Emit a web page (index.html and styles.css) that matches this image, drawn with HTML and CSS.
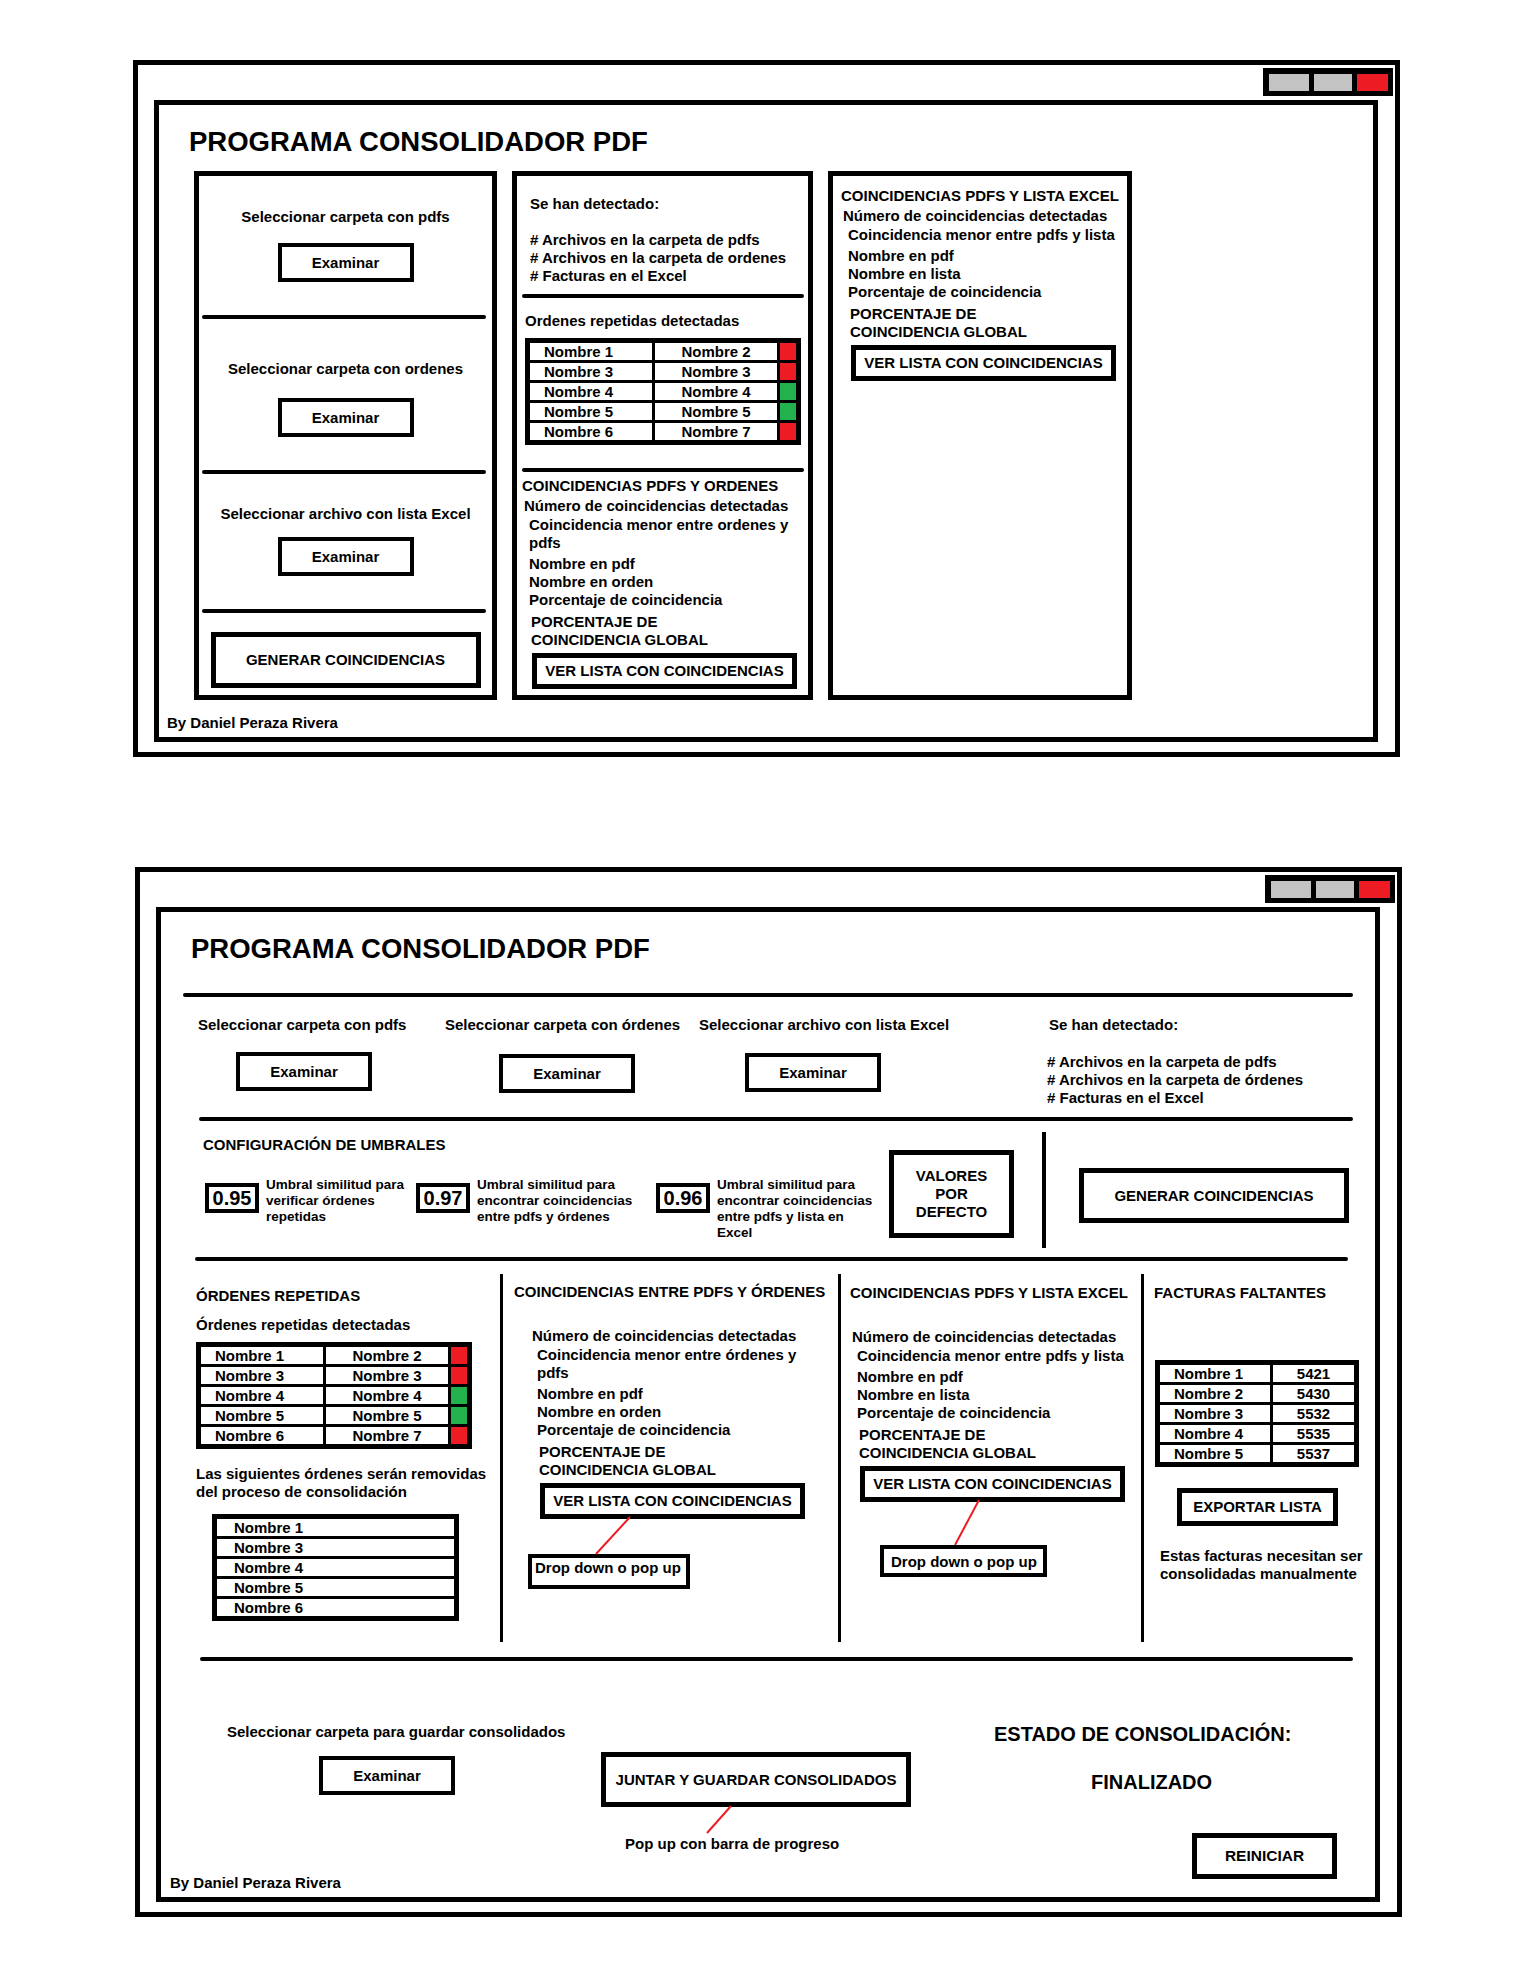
FILE: index.html
```html
<!DOCTYPE html>
<html lang="es">
<head>
    <meta charset="UTF-8">
    <meta name="viewport" content="width=device-width, initial-scale=1.0">
    <title>Programa Consolidador PDF - Bocetos</title>
    <link rel="stylesheet" href="styles.css">
</head>
<body>

    <!-- Boceto 1: tres paneles -->
    <div class="window">
        <div class="win-controls">
            <span class="win-btn"></span>
            <span class="win-btn win-btn-max"></span>
            <span class="win-btn win-btn-close"></span>
        </div>
        <div class="app">
            <h1 class="app-title">PROGRAMA CONSOLIDADOR PDF</h1>

            <div class="panels">
                <div class="panel">
                    <div class="pick pick-pdfs">
                        <p>Seleccionar carpeta con pdfs</p>
                        <button class="btn btn-examinar">Examinar</button>
                    </div>
                    <div class="rule rule-panel"></div>
                    <div class="pick pick-ordenes">
                        <p>Seleccionar carpeta con ordenes</p>
                        <button class="btn btn-examinar">Examinar</button>
                    </div>
                    <div class="rule rule-panel"></div>
                    <div class="pick pick-excel">
                        <p>Seleccionar archivo con lista Excel</p>
                        <button class="btn btn-examinar">Examinar</button>
                    </div>
                    <div class="rule rule-panel"></div>
                    <div class="pick pick-run">
                        <button class="btn btn-generar">GENERAR COINCIDENCIAS</button>
                    </div>
                </div>

                <div class="panel panel-mid">
                    <div class="detect">
                        <p class="detect-head">Se han detectado:</p>
                        <ul class="detect-list">
                            <li># Archivos en la carpeta de pdfs</li>
                            <li># Archivos en la carpeta de ordenes</li>
                            <li># Facturas en el Excel</li>
                        </ul>
                    </div>
                    <div class="rule rule-mid"></div>
                    <p class="rep-label">Ordenes repetidas detectadas</p>
                    <div class="name-grid">
                        <span class="cell cell-a">Nombre 1</span><span class="cell cell-b">Nombre 2</span><span class="flag flag-red"></span>
                        <span class="cell cell-a">Nombre 3</span><span class="cell cell-b">Nombre 3</span><span class="flag flag-red"></span>
                        <span class="cell cell-a">Nombre 4</span><span class="cell cell-b">Nombre 4</span><span class="flag flag-green"></span>
                        <span class="cell cell-a">Nombre 5</span><span class="cell cell-b">Nombre 5</span><span class="flag flag-green"></span>
                        <span class="cell cell-a">Nombre 6</span><span class="cell cell-b">Nombre 7</span><span class="flag flag-red"></span>
                    </div>
                    <div class="rule rule-mid rule-mid-low"></div>
                    <div class="stats">
                        <p class="stats-head">COINCIDENCIAS PDFS Y ORDENES</p>
                        <div class="stats-body">
                            <p class="stats-count">Número de coincidencias detectadas</p>
                            <p class="stats-low">Coincidencia menor entre ordenes y<br>pdfs</p>
                            <ul class="stats-names">
                                <li>Nombre en pdf</li>
                                <li>Nombre en orden</li>
                                <li>Porcentaje de coincidencia</li>
                            </ul>
                            <p class="stats-global">PORCENTAJE DE<br>COINCIDENCIA GLOBAL</p>
                            <div class="stats-action">
                                <button class="btn btn-list">VER LISTA CON COINCIDENCIAS</button>
                            </div>
                        </div>
                    </div>
                </div>

                <div class="panel panel-right">
                    <div class="stats">
                        <p class="stats-head">COINCIDENCIAS PDFS Y LISTA EXCEL</p>
                        <div class="stats-body">
                            <p class="stats-count">Número de coincidencias detectadas</p>
                            <p class="stats-low">Coincidencia menor entre pdfs y lista</p>
                            <ul class="stats-names">
                                <li>Nombre en pdf</li>
                                <li>Nombre en lista</li>
                                <li>Porcentaje de coincidencia</li>
                            </ul>
                            <p class="stats-global">PORCENTAJE DE<br>COINCIDENCIA GLOBAL</p>
                            <div class="stats-action">
                                <button class="btn btn-list">VER LISTA CON COINCIDENCIAS</button>
                            </div>
                        </div>
                    </div>
                </div>
            </div>

            <p class="credit credit-top">By Daniel Peraza Rivera</p>
        </div>
    </div>

    <!-- Boceto 2: flujo completo -->
    <div class="window window-v2">
        <div class="win-controls">
            <span class="win-btn"></span>
            <span class="win-btn win-btn-max"></span>
            <span class="win-btn win-btn-close"></span>
        </div>
        <div class="app">
            <h1 class="app-title">PROGRAMA CONSOLIDADOR PDF</h1>
            <div class="rule rule-top"></div>

            <div class="sources">
                <div class="source source-pdfs">
                    <p>Seleccionar carpeta con pdfs</p>
                    <button class="btn btn-examinar">Examinar</button>
                </div>
                <div class="source source-ordenes">
                    <p>Seleccionar carpeta con órdenes</p>
                    <button class="btn btn-examinar">Examinar</button>
                </div>
                <div class="source source-excel">
                    <p>Seleccionar archivo con lista Excel</p>
                    <button class="btn btn-examinar">Examinar</button>
                </div>
                <div class="detect detect-v2">
                    <p class="detect-head">Se han detectado:</p>
                    <ul class="detect-list">
                        <li># Archivos en la carpeta de pdfs</li>
                        <li># Archivos en la carpeta de órdenes</li>
                        <li># Facturas en el Excel</li>
                    </ul>
                </div>
            </div>
            <div class="rule rule-sources"></div>

            <div class="config">
                <div class="umbrales">
                    <p class="config-title">CONFIGURACIÓN DE UMBRALES</p>
                    <div class="umbral-row">
                        <div class="umbral umbral-1">
                            <span class="umbral-value">0.95</span>
                            <p class="umbral-text">Umbral similitud para<br>verificar órdenes<br>repetidas</p>
                        </div>
                        <div class="umbral umbral-2">
                            <span class="umbral-value">0.97</span>
                            <p class="umbral-text">Umbral similitud para<br>encontrar coincidencias<br>entre pdfs y órdenes</p>
                        </div>
                        <div class="umbral">
                            <span class="umbral-value">0.96</span>
                            <p class="umbral-text">Umbral similitud para<br>encontrar coincidencias<br>entre pdfs y lista en<br>Excel</p>
                        </div>
                    </div>
                </div>
                <button class="btn valores">VALORES<br>POR<br>DEFECTO</button>
                <div class="config-divider"></div>
                <button class="btn btn-generar-wide">GENERAR COINCIDENCIAS</button>
            </div>
            <div class="rule rule-config"></div>

            <div class="results">
                <div class="col col-repeated">
                    <p>ÓRDENES REPETIDAS</p>
                    <p class="col-sub">Órdenes repetidas detectadas</p>
                    <div class="name-grid">
                        <span class="cell cell-a">Nombre 1</span><span class="cell cell-b">Nombre 2</span><span class="flag flag-red"></span>
                        <span class="cell cell-a">Nombre 3</span><span class="cell cell-b">Nombre 3</span><span class="flag flag-red"></span>
                        <span class="cell cell-a">Nombre 4</span><span class="cell cell-b">Nombre 4</span><span class="flag flag-green"></span>
                        <span class="cell cell-a">Nombre 5</span><span class="cell cell-b">Nombre 5</span><span class="flag flag-green"></span>
                        <span class="cell cell-a">Nombre 6</span><span class="cell cell-b">Nombre 7</span><span class="flag flag-red"></span>
                    </div>
                    <p class="col-note">Las siguientes órdenes serán removidas<br>del proceso de consolidación</p>
                    <ul class="removed-list">
                        <li>Nombre 1</li>
                        <li>Nombre 3</li>
                        <li>Nombre 4</li>
                        <li>Nombre 5</li>
                        <li>Nombre 6</li>
                    </ul>
                </div>

                <div class="col col-pdf-orders">
                    <div class="stats stats-wide stats-indent">
                        <p class="stats-head">COINCIDENCIAS ENTRE PDFS Y ÓRDENES</p>
                        <div class="stats-body">
                            <p class="stats-count">Número de coincidencias detectadas</p>
                            <p class="stats-low">Coincidencia menor entre órdenes y<br>pdfs</p>
                            <ul class="stats-names">
                                <li>Nombre en pdf</li>
                                <li>Nombre en orden</li>
                                <li>Porcentaje de coincidencia</li>
                            </ul>
                            <p class="stats-global">PORCENTAJE DE<br>COINCIDENCIA GLOBAL</p>
                            <div class="stats-action pop-demo">
                                <button class="btn btn-list">VER LISTA CON COINCIDENCIAS</button>
                                <div class="dropbox dropbox-orders">Drop down o pop up</div>
                                <svg class="connector" width="120" height="80"><line x1="90" y1="34" x2="56" y2="71"/></svg>
                            </div>
                        </div>
                    </div>
                </div>

                <div class="col col-pdf-excel">
                    <div class="stats stats-wide">
                        <p class="stats-head">COINCIDENCIAS PDFS Y LISTA EXCEL</p>
                        <div class="stats-body">
                            <p class="stats-count">Número de coincidencias detectadas</p>
                            <p class="stats-low">Coincidencia menor entre pdfs y lista</p>
                            <ul class="stats-names">
                                <li>Nombre en pdf</li>
                                <li>Nombre en lista</li>
                                <li>Porcentaje de coincidencia</li>
                            </ul>
                            <p class="stats-global">PORCENTAJE DE<br>COINCIDENCIA GLOBAL</p>
                            <div class="stats-action pop-demo">
                                <button class="btn btn-list">VER LISTA CON COINCIDENCIAS</button>
                                <div class="dropbox dropbox-excel">Drop down o pop up</div>
                                <svg class="connector" width="130" height="90"><line x1="119" y1="34" x2="95" y2="79"/></svg>
                            </div>
                        </div>
                    </div>
                </div>

                <div class="col col-missing">
                    <p>FACTURAS FALTANTES</p>
                    <div class="name-grid name-grid-missing">
                        <span class="cell cell-a">Nombre 1</span><span class="cell cell-b">5421</span>
                        <span class="cell cell-a">Nombre 2</span><span class="cell cell-b">5430</span>
                        <span class="cell cell-a">Nombre 3</span><span class="cell cell-b">5532</span>
                        <span class="cell cell-a">Nombre 4</span><span class="cell cell-b">5535</span>
                        <span class="cell cell-a">Nombre 5</span><span class="cell cell-b">5537</span>
                    </div>
                    <button class="btn btn-export">EXPORTAR LISTA</button>
                    <p class="col-note">Estas facturas necesitan ser<br>consolidadas manualmente</p>
                </div>
            </div>
            <div class="rule rule-results"></div>

            <div class="finish">
                <div class="save">
                    <p class="save-label">Seleccionar carpeta para guardar consolidados</p>
                    <button class="btn btn-examinar">Examinar</button>
                    <p class="credit">By Daniel Peraza Rivera</p>
                </div>
                <div class="merge">
                    <div class="pop-demo merge-demo">
                        <button class="btn btn-merge">JUNTAR Y GUARDAR CONSOLIDADOS</button>
                        <p class="merge-note">Pop up con barra de progreso</p>
                        <svg class="connector" width="140" height="90"><line x1="130" y1="54" x2="106" y2="81"/></svg>
                    </div>
                </div>
                <div class="status">
                    <p class="status-title">ESTADO DE CONSOLIDACIÓN:</p>
                    <p class="status-value">FINALIZADO</p>
                    <button class="btn btn-reset">REINICIAR</button>
                </div>
            </div>
        </div>
    </div>

</body>
</html>
```

FILE: styles.css
```css
/* General */
body {
    margin: 0;
    padding: 60px 0 40px;
    background-color: #ffffff;
    color: #000;
    font-family: "Liberation Sans", Arial, sans-serif;
    font-size: 15px;
    font-weight: bold;
    line-height: 18px;
}

h1, p, ul {
    margin: 0;
    padding: 0;
}

ul {
    list-style: none;
}

/* Window frame */
.window {
    box-sizing: border-box;
    width: 1267px;
    margin-left: 133px;
    border: 5px solid #000;
}

.window-v2 {
    margin-top: 110px;
    margin-left: 135px;
}

.win-controls {
    display: flex;
    gap: 5px;
    width: max-content;
    margin: 3px 2px 0 auto;
    padding: 6px 5px 5px 6px;
    background-color: #000;
}

.win-btn {
    width: 40px;
    height: 17px;
    background-color: #c3c3c3;
}

.win-btn-max {
    width: 38px;
}

.win-btn-close {
    width: 31px;
    background-color: #ed1c24;
}

.app {
    margin: 4px 17px 10px 16px;
    padding-bottom: 5px;
    border: 5px solid #000;
}

.app-title {
    padding: 21px 0 0 30px;
    font-size: 27.5px;
    line-height: 32px;
}

.rule {
    height: 4px;
    background-color: #000;
    border-radius: 2px;
}

.credit-top {
    margin: 14px 0 0 8px;
}

/* Buttons */
.btn {
    display: flex;
    align-items: center;
    justify-content: center;
    box-sizing: border-box;
    padding: 0;
    border: 5px solid #000;
    background-color: #fff;
    color: #000;
    font: inherit;
    text-align: center;
}

.btn-examinar {
    width: 136px;
    height: 39px;
    border-width: 4px;
}

.btn-generar {
    width: 270px;
    height: 56px;
}

.btn-list {
    width: 265px;
    height: 36px;
}

/* Sketch 1 panels */
.panels {
    display: grid;
    grid-template-columns: 303px 301px 304px;
    column-gap: 15px;
    margin: 13px 0 0 35px;
}

.panel {
    box-sizing: border-box;
    height: 529px;
    border: 5px solid #000;
}

.pick {
    display: flex;
    flex-direction: column;
    align-items: center;
    box-sizing: border-box;
}

.pick-pdfs {
    height: 139px;
    padding-top: 32px;
    gap: 17px;
}

.pick-ordenes {
    height: 151px;
    padding-top: 41px;
    gap: 20px;
}

.pick-excel {
    height: 135px;
    padding-top: 31px;
    gap: 14px;
}

.pick-run {
    padding-top: 19px;
}

.rule-panel {
    margin: 0 6px 0 3px;
}

.panel-mid .detect {
    padding: 19px 0 0 13px;
}

.detect-list {
    margin-top: 18px;
}

.rule-mid {
    margin: 9px 4px 0 5px;
}

.rep-label {
    margin: 14px 0 0 8px;
}

.panel-mid .name-grid {
    margin: 8px 0 0 8px;
}

.rule-mid-low {
    margin-top: 23px;
}

.panel-mid .stats {
    margin: 5px 0 0 5px;
}

.panel-right .stats {
    margin: 11px 0 0 8px;
}

/* Match summary block */
.stats-head {
    margin-bottom: 2px;
}

.stats-count {
    margin: 0 0 1px 2px;
}

.stats-low {
    margin: 0 0 3px 7px;
}

.stats-names {
    margin: 0 0 4px 7px;
}

.stats-global {
    margin: 0 0 4px 9px;
}

.stats-action {
    margin-left: 10px;
}

.stats-wide .stats-head {
    margin-bottom: 26px;
}

.stats-indent .stats-body {
    padding-left: 16px;
}

/* Name tables */
.name-grid {
    display: grid;
    grid-template-columns: 122px 122px 16px;
    grid-auto-rows: 17px;
    gap: 3px;
    width: max-content;
    border: 5px solid #000;
    background-color: #000;
    line-height: 17px;
}

.cell {
    background-color: #fff;
}

.cell-a {
    padding-left: 14px;
}

.cell-b {
    text-align: center;
}

.flag-red {
    background-color: #ed1c24;
}

.flag-green {
    background-color: #22b14c;
}

.name-grid-missing {
    grid-template-columns: 110px 81px;
}

.removed-list {
    display: grid;
    grid-auto-rows: 17px;
    gap: 3px;
    box-sizing: border-box;
    width: 247px;
    margin: 13px 0 0 16px;
    border: 5px solid #000;
    background-color: #000;
    line-height: 17px;
}

.removed-list li {
    padding-left: 17px;
    background-color: #fff;
}

/* Sketch 2 */
.rule-top {
    margin: 28px 22px 0 22px;
}

.sources {
    display: grid;
    grid-template-columns: 247px 254px 348px 1fr;
    margin-top: 19px;
    padding-left: 37px;
}

.source {
    display: flex;
    flex-direction: column;
    align-items: flex-start;
    gap: 18px;
}

.source-pdfs .btn {
    margin-left: 38px;
}

.source-ordenes .btn {
    margin: 2px 0 0 54px;
}

.source-excel .btn {
    margin: 1px 0 0 46px;
}

.detect-v2 .detect-head {
    margin-left: 2px;
}

.detect-v2 .detect-list {
    margin-top: 19px;
}

.rule-sources {
    margin: 10px 22px 0 38px;
}

.config {
    display: flex;
    align-items: flex-start;
    padding-left: 42px;
}

.umbrales {
    width: 686px;
}

.config-title {
    margin-top: 15px;
}

.umbral-row {
    display: flex;
    margin-top: 23px;
}

.umbral {
    display: flex;
    align-items: flex-start;
}

.umbral-1 {
    width: 211px;
    margin-left: 2px;
}

.umbral-2 {
    width: 240px;
}

.umbral-value {
    box-sizing: border-box;
    width: 54px;
    height: 30px;
    margin-top: 6px;
    border: 4px solid #000;
    font-size: 20px;
    line-height: 22px;
    text-align: center;
}

.umbral-text {
    margin-left: 7px;
    font-size: 13.5px;
    line-height: 16px;
}

.valores {
    width: 125px;
    height: 88px;
    margin-top: 29px;
}

.config-divider {
    width: 4px;
    height: 116px;
    margin: 11px 0 0 28px;
    background-color: #000;
}

.btn-generar-wide {
    width: 270px;
    height: 55px;
    margin: 47px 0 0 33px;
}

.rule-config {
    margin: 9px 27px 0 34px;
}

.results {
    display: grid;
    grid-template-columns: 339px 338px 303px 234px;
    height: 368px;
    margin-top: 13px;
}

.col {
    box-sizing: border-box;
}

.col + .col {
    border-left: 3px solid #000;
}

.col-repeated {
    padding: 13px 0 0 35px;
}

.col-sub {
    margin-top: 11px;
}

.col-repeated .name-grid {
    margin-top: 8px;
}

.col-note {
    margin-top: 16px;
}

.col-pdf-orders {
    padding: 9px 0 0 11px;
}

.col-pdf-excel {
    padding: 10px 0 0 9px;
}

.col-missing {
    padding: 10px 0 0 10px;
}

.col-missing .name-grid {
    margin: 58px 0 0 1px;
}

.btn-export {
    width: 161px;
    height: 38px;
    margin: 21px 0 0 23px;
}

.col-missing .col-note {
    margin: 21px 0 0 6px;
}

/* Popup annotations */
.pop-demo {
    position: relative;
}

.dropbox {
    box-sizing: border-box;
    border: 4px solid #000;
}

.dropbox-orders {
    width: 162px;
    height: 35px;
    margin: 35px 0 0 -12px;
    padding: 1px 0 0 3px;
}

.dropbox-excel {
    width: 167px;
    height: 32px;
    margin: 43px 0 0 20px;
    padding: 4px 0 0 7px;
}

.connector {
    position: absolute;
    left: 0;
    top: 0;
    overflow: visible;
    pointer-events: none;
}

.connector line {
    stroke: #ed1c24;
    stroke-width: 2;
}

.rule-results {
    margin: 15px 22px 0 39px;
}

.finish {
    display: flex;
}

.save {
    display: flex;
    flex-direction: column;
    align-items: flex-start;
    width: 440px;
}

.save-label {
    margin: 62px 0 0 66px;
}

.save .btn-examinar {
    margin: 15px 0 0 158px;
}

.save .credit {
    margin: auto 0 0 9px;
}

.merge {
    width: 393px;
}

.merge-demo {
    margin-top: 91px;
}

.btn-merge {
    width: 310px;
    height: 55px;
}

.merge-note {
    margin: 28px 0 0 24px;
}

.status {
    display: flex;
    flex-direction: column;
    align-items: flex-start;
    padding-bottom: 13px;
}

.status-title,
.status-value {
    font-size: 20px;
    line-height: 24px;
}

.status-title {
    margin-top: 61px;
}

.status-value {
    margin: 24px 0 0 97px;
}

.btn-reset {
    width: 145px;
    height: 46px;
    margin: 39px 0 0 198px;
    font-size: 15.5px;
}
```
